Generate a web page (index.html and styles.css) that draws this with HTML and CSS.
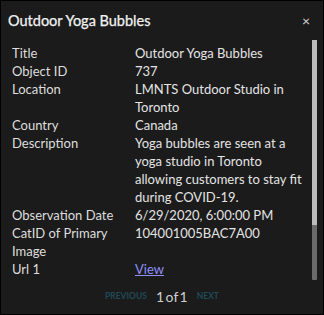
FILE: index.html
```html
<!DOCTYPE html>
<html lang="en">
<head>
  <meta charset="UTF-8">
  <title>Outdoor Yoga Bubbles</title>
  <link rel="stylesheet" href="styles.css">
</head>
<body>
  <div class="popup">
    <div class="popup-header">
      <h2 class="popup-title">Outdoor Yoga Bubbles</h2>
      <button class="close-btn" title="Close">&#215;</button>
    </div>
    <div class="popup-body">
      <div class="popup-content">
        <table class="attr-table">
          <tr><th>Title</th><td>Outdoor Yoga Bubbles</td></tr>
          <tr><th>Object ID</th><td>737</td></tr>
          <tr><th>Location</th><td>LMNTS Outdoor Studio in Toronto</td></tr>
          <tr><th>Country</th><td>Canada</td></tr>
          <tr><th>Description</th><td>Yoga bubbles are seen at a yoga studio in Toronto allowing customers to stay fit during COVID-19.</td></tr>
          <tr><th>Observation Date</th><td>6/29/2020, 6:00:00 PM</td></tr>
          <tr><th>CatID of Primary Image</th><td>104001005BAC7A00</td></tr>
          <tr><th>Url 1</th><td><a href="#" class="link">View</a></td></tr>
        </table>
      </div>
      <div class="scroll-track"><div class="scroll-thumb"></div></div>
    </div>
    <div class="pager">
      <span class="pager-btn">Previous</span>
      <span class="pager-count">1 of 1</span>
      <span class="pager-btn">Next</span>
    </div>
  </div>
</body>
</html>
```

FILE: styles.css
```css
html, body { margin: 0; padding: 0; background: #1b1b1b; }
body { font-family: Lato, "Noto Sans", sans-serif; color: #e0e0e0; }

.popup { width: 324px; height: 315px; box-sizing: border-box; border: 1px solid #000; background: #1b1b1b; display: flex; flex-direction: column; }

.popup-header { display: flex; align-items: center; justify-content: space-between; height: 39px; padding: 0 13px 0 7px; flex-shrink: 0; }
.popup-title { margin: 0; font-size: 14.5px; font-weight: 400; color: #f2f2f2; -webkit-text-stroke: 0.25px #f2f2f2; }
.close-btn { background: none; border: none; color: #d8d8d8; font-size: 14px; padding: 0; cursor: pointer; font-family: inherit; }

.popup-body { height: 240px; display: flex; padding: 0 6px 0 11px; flex-shrink: 0; }
.popup-content { flex: 1; overflow: hidden; }
.scroll-track { width: 5px; background: #6b6b6b; display: flex; flex-direction: column; border-radius: 1px; }
.scroll-thumb { height: 185px; background: #bcbcbc; }

.attr-table { border-collapse: collapse; font-size: 13px; line-height: 18px; }
.attr-table th, .attr-table td { padding: 0; vertical-align: top; text-align: left; font-weight: 400; }
.attr-table th { width: 123px; color: #dedede; }
.attr-table td { width: 172px; color: #e4e4e4; }
.attr-table tr:first-child th, .attr-table tr:first-child td { padding-top: 4px; }
.link { color: #8f8fff; }

.pager { display: flex; justify-content: center; align-items: center; gap: 9px; flex: 1; padding-bottom: 2px; }
.pager-btn { text-transform: uppercase; font-size: 8.5px; font-weight: 700; color: #1f4a57; }
.pager-count { font-size: 14px; color: #cfcfcf; word-spacing: -2px; }
```
